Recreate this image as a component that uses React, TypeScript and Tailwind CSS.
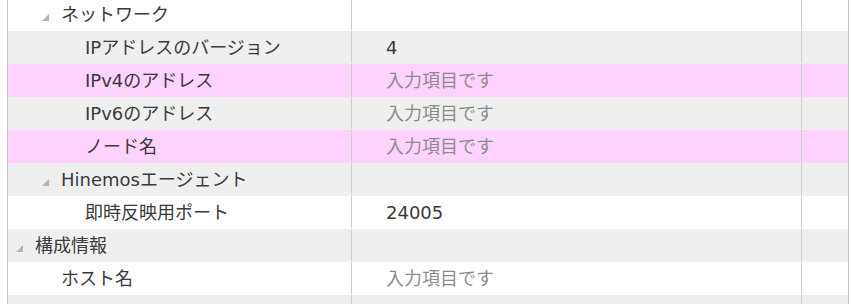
type Row = {
  label: string;
  value?: string;
  placeholder?: boolean;
  level: 0 | 1 | 2;
  group?: boolean;
  tone: "white" | "gray" | "pink";
};

const rows: Row[] = [
  { label: "ネットワーク", level: 1, group: true, tone: "white" },
  { label: "IPアドレスのバージョン", value: "4", level: 2, tone: "gray" },
  { label: "IPv4のアドレス", value: "入力項目です", placeholder: true, level: 2, tone: "pink" },
  { label: "IPv6のアドレス", value: "入力項目です", placeholder: true, level: 2, tone: "gray" },
  { label: "ノード名", value: "入力項目です", placeholder: true, level: 2, tone: "pink" },
  { label: "Hinemosエージェント", level: 1, group: true, tone: "gray" },
  { label: "即時反映用ポート", value: "24005", level: 2, tone: "white" },
  { label: "構成情報", level: 0, group: true, tone: "gray" },
  { label: "ホスト名", value: "入力項目です", placeholder: true, level: 1, tone: "white" },
  { label: "OS", level: 1, tone: "gray" },
];

const toneClass = {
  white: "bg-white",
  gray: "bg-[#efefef]",
  pink: "bg-[#ffd2ff]",
};

// groups carry a caret, leaves line up with their parent's text
const groupIndent = {
  0: "pl-[8px]",
  1: "pl-[34px]",
  2: "pl-[60px]",
};

const leafIndent = {
  0: "pl-[27px]",
  1: "pl-[53px]",
  2: "pl-[77px]",
};

function Caret() {
  return (
    <svg width="7" height="7" viewBox="0 0 7 7" className="mr-[12px] mt-[4px] shrink-0" aria-hidden="true">
      <polygon points="7,0 7,7 0,7" fill="#b4b4b4" />
    </svg>
  );
}

export default function App() {
  return (
    <div
      className="h-[304px] w-[852px] overflow-hidden bg-white text-[18px] text-[#3a3a3a]"
      style={{ fontFamily: '"DejaVu Sans", "Noto Sans CJK JP", sans-serif' }}
    >
      <div className="mt-[-2px] ml-[7px] w-[842px] border-l border-r border-[#c8c8c8]">
        {rows.map((row, i) => (
          <div key={i} className={`flex h-[33px] ${toneClass[row.tone]}`}>
            <div className="flex w-[344px] shrink-0 flex-col">
              <div
                className={`flex h-[32px] items-center border-r-[1.5px] border-[#cdcdcd] pt-[2px] ${
                  row.group ? groupIndent[row.level] : leafIndent[row.level]
                }`}
              >
                {row.group && <Caret />}
                <span className="whitespace-nowrap leading-none">{row.label}</span>
              </div>
            </div>
            <div className="flex w-[450px] shrink-0 flex-col">
              <div className="flex h-[32px] items-center border-r-[1.5px] border-[#cdcdcd] pl-[34px] pt-[2px]">
                {row.value && (
                  <span className={`whitespace-nowrap leading-none ${row.placeholder ? "text-[#8c8c8c]" : "text-[#3a3a3a]"}`}>
                    {row.value}
                  </span>
                )}
              </div>
            </div>
            <div className="flex-1" />
          </div>
        ))}
      </div>
    </div>
  );
}
